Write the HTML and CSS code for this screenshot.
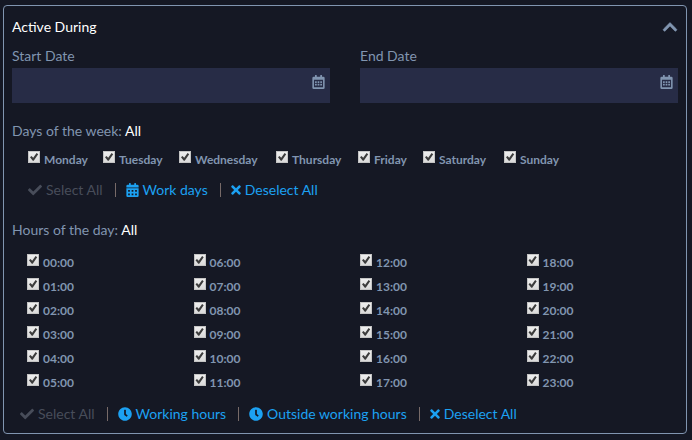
FILE: index.html
```html
<!DOCTYPE html>
<html lang="en">
<head>
<meta charset="utf-8">
<title>Active During</title>
<link rel="stylesheet" href="styles.css">
</head>
<body>
<svg class="sprite" aria-hidden="true">
  <symbol id="check" viewBox="0 0 512 512"><path d="M173.898 439.404l-166.4-166.4c-9.997-9.997-9.997-26.206 0-36.204l36.203-36.204c9.997-9.998 26.207-9.998 36.204 0L192 312.69 432.095 72.596c9.997-9.997 26.207-9.997 36.204 0l36.203 36.204c9.997 9.997 9.997 26.206 0 36.204l-294.4 294.401c-9.998 9.997-26.207 9.997-36.204-.001z"/></symbol>
  <symbol id="times" viewBox="0 0 352 512"><path d="M242.72 256l100.07-100.07c12.28-12.28 12.28-32.19 0-44.48l-22.24-22.24c-12.28-12.28-32.19-12.28-44.48 0L176 189.28 75.93 89.21c-12.28-12.28-32.19-12.28-44.48 0L9.21 111.45c-12.28 12.28-12.28 32.19 0 44.48L109.28 256 9.21 356.07c-12.28 12.28-12.28 32.19 0 44.48l22.24 22.24c12.28 12.28 32.2 12.28 44.48 0L176 322.72l100.07 100.07c12.28 12.28 32.2 12.28 44.48 0l22.24-22.24c12.28-12.28 12.28-32.19 0-44.48L242.72 256z"/></symbol>
  <symbol id="clock" viewBox="0 0 512 512"><path d="M256,8C119,8,8,119,8,256S119,504,256,504,504,393,504,256,393,8,256,8Zm92.49,313h0l-20,25a16,16,0,0,1-22.49,2.5h0l-67-49.72a40,40,0,0,1-15-31.23V112a16,16,0,0,1,16-16h32a16,16,0,0,1,16,16V256l58,42.5A16,16,0,0,1,348.49,321Z"/></symbol>
  <symbol id="calendar" viewBox="0 0 448 512"><path fill-rule="evenodd" d="M0 192h448v272a48 48 0 0 1-48 48H48a48 48 0 0 1-48-48zM64 256v64h64v-64zM192 256v64h64v-64zM320 256v64h64v-64zM64 384v64h64v-64zM192 384v64h64v-64zM320 384v64h64v-64zM0 160v-48a48 48 0 0 1 48-48h48V16a16 16 0 0 1 16-16h32a16 16 0 0 1 16 16v48h128V16a16 16 0 0 1 16-16h32a16 16 0 0 1 16 16v48h48a48 48 0 0 1 48 48v48z"/></symbol>
  <symbol id="calendar-outline" viewBox="0 0 448 512"><path fill-rule="evenodd" d="M400 64h-48V12a12 12 0 0 0-12-12h-40a12 12 0 0 0-12 12v52H160V12a12 12 0 0 0-12-12h-40a12 12 0 0 0-12 12v52H48a48 48 0 0 0-48 48v352a48 48 0 0 0 48 48h352a48 48 0 0 0 48-48V112a48 48 0 0 0-48-48zM58 170h332v282H58z"/><path d="M96 236a12 12 0 0 1 12-12h40a12 12 0 0 1 12 12v40a12 12 0 0 1-12 12h-40a12 12 0 0 1-12-12zM192 236a12 12 0 0 1 12-12h40a12 12 0 0 1 12 12v40a12 12 0 0 1-12 12h-40a12 12 0 0 1-12-12zM288 236a12 12 0 0 1 12-12h40a12 12 0 0 1 12 12v40a12 12 0 0 1-12 12h-40a12 12 0 0 1-12-12zM96 332a12 12 0 0 1 12-12h40a12 12 0 0 1 12 12v40a12 12 0 0 1-12 12h-40a12 12 0 0 1-12-12zM192 332a12 12 0 0 1 12-12h40a12 12 0 0 1 12 12v40a12 12 0 0 1-12 12h-40a12 12 0 0 1-12-12zM288 332a12 12 0 0 1 12-12h40a12 12 0 0 1 12 12v40a12 12 0 0 1-12 12h-40a12 12 0 0 1-12-12z"/></symbol>
  <symbol id="chevron-up" viewBox="0 0 448 512"><path stroke="currentColor" stroke-width="20" d="M240.971 130.524l194.343 194.343c9.373 9.373 9.373 24.569 0 33.941l-22.667 22.667c-9.357 9.357-24.522 9.375-33.901.04L224 227.495 69.255 381.516c-9.379 9.335-24.544 9.317-33.901-.04l-22.667-22.667c-9.373-9.373-9.373-24.569 0-33.941L207.03 130.525c9.372-9.373 24.568-9.373 33.941-.001z"/></symbol>
</svg>

<main class="panel">
  <header class="panel-head">
    <h1 class="title">Active During</h1>
    <button class="icon-button" type="button" aria-label="Collapse"><svg class="icon icon-chevron"><use href="#chevron-up"/></svg></button>
  </header>

  <div class="dates">
    <div class="field">
      <label for="start">Start Date</label>
      <div class="date-box">
        <input class="date-input" id="start" type="text">
        <button class="icon-button" type="button" aria-label="Pick start date"><svg class="icon icon-date"><use href="#calendar-outline"/></svg></button>
      </div>
    </div>
    <div class="field">
      <label for="end">End Date</label>
      <div class="date-box">
        <input class="date-input" id="end" type="text">
        <button class="icon-button" type="button" aria-label="Pick end date"><svg class="icon icon-date"><use href="#calendar-outline"/></svg></button>
      </div>
    </div>
  </div>

  <section class="group">
    <h2 class="group-title">Days of the week: <span class="value">All</span></h2>
    <div class="days">
      <label class="option"><input type="checkbox" checked>Monday</label>
      <label class="option"><input type="checkbox" checked>Tuesday</label>
      <label class="option"><input type="checkbox" checked>Wednesday</label>
      <label class="option"><input type="checkbox" checked>Thursday</label>
      <label class="option"><input type="checkbox" checked>Friday</label>
      <label class="option"><input type="checkbox" checked>Saturday</label>
      <label class="option"><input type="checkbox" checked>Sunday</label>
    </div>
    <div class="actions actions-days">
      <button class="action" type="button" disabled><svg class="icon icon-wide"><use href="#check"/></svg>Select All</button>
      <button class="action" type="button"><svg class="icon icon-calendar"><use href="#calendar"/></svg>Work days</button>
      <button class="action" type="button"><svg class="icon icon-times"><use href="#times"/></svg>Deselect All</button>
    </div>
  </section>

  <section class="group">
    <h2 class="group-title">Hours of the day: <span class="value">All</span></h2>
    <div class="hours">
      <label class="option"><input type="checkbox" checked>00:00</label>
      <label class="option"><input type="checkbox" checked>01:00</label>
      <label class="option"><input type="checkbox" checked>02:00</label>
      <label class="option"><input type="checkbox" checked>03:00</label>
      <label class="option"><input type="checkbox" checked>04:00</label>
      <label class="option"><input type="checkbox" checked>05:00</label>
      <label class="option"><input type="checkbox" checked>06:00</label>
      <label class="option"><input type="checkbox" checked>07:00</label>
      <label class="option"><input type="checkbox" checked>08:00</label>
      <label class="option"><input type="checkbox" checked>09:00</label>
      <label class="option"><input type="checkbox" checked>10:00</label>
      <label class="option"><input type="checkbox" checked>11:00</label>
      <label class="option"><input type="checkbox" checked>12:00</label>
      <label class="option"><input type="checkbox" checked>13:00</label>
      <label class="option"><input type="checkbox" checked>14:00</label>
      <label class="option"><input type="checkbox" checked>15:00</label>
      <label class="option"><input type="checkbox" checked>16:00</label>
      <label class="option"><input type="checkbox" checked>17:00</label>
      <label class="option"><input type="checkbox" checked>18:00</label>
      <label class="option"><input type="checkbox" checked>19:00</label>
      <label class="option"><input type="checkbox" checked>20:00</label>
      <label class="option"><input type="checkbox" checked>21:00</label>
      <label class="option"><input type="checkbox" checked>22:00</label>
      <label class="option"><input type="checkbox" checked>23:00</label>
    </div>
    <div class="actions actions-hours">
      <button class="action" type="button" disabled><svg class="icon icon-wide"><use href="#check"/></svg>Select All</button>
      <button class="action" type="button"><svg class="icon icon-wide"><use href="#clock"/></svg>Working hours</button>
      <button class="action" type="button"><svg class="icon icon-wide"><use href="#clock"/></svg>Outside working hours</button>
      <button class="action" type="button"><svg class="icon icon-times"><use href="#times"/></svg>Deselect All</button>
    </div>
  </section>
</main>
</body>
</html>
```
FILE: styles.css
```css
* { box-sizing: border-box; }

body {
  margin: 0;
  padding: 5px 5px 5px 3px;
  background: #151824;
  color: #8195b0;
  font: 14px/20px Lato, "Open Sans", sans-serif;
}

button, input { font: inherit; color: inherit; }

.sprite { display: none; }
.icon { display: block; flex: none; height: 14px; fill: currentColor; }
.icon-wide { width: 14px; }
.icon-calendar { width: 13px; }
.icon-times { width: 10px; }
.icon-date { width: 13px; height: 14px; }
.icon-chevron { width: 16px; height: 16px; overflow: visible; }

.panel {
  padding: 11px 8px 9px;
  border: 1px solid #8195b0;
  border-radius: 4px;
}

.panel-head {
  display: flex;
  justify-content: space-between;
  align-items: center;
}

.title {
  margin: 0;
  color: #fff;
  font-size: 14px;
  font-weight: 400;
}

.icon-button {
  padding: 0;
  border: 0;
  background: none;
  cursor: pointer;
}

.dates {
  display: grid;
  grid-template-columns: 1fr 1fr;
  gap: 30px;
  margin-top: 9px;
}

.field { display: flex; flex-direction: column; gap: 2px; }

.date-box {
  display: flex;
  align-items: flex-start;
  height: 35px;
  padding: 7px 5px 0 8px;
  background: #272c46;
}

.date-input {
  flex: 1;
  min-width: 0;
  padding: 0;
  border: 0;
  outline: 0;
  background: none;
}

.group { margin-top: 18px; }
.group + .group { margin-top: 20px; }
.group-title { margin: 0; font-size: 14px; font-weight: 400; }
.value { color: #fff; }

.option {
  display: flex;
  gap: 4px;
  font-size: 12px;
  font-weight: 700;
  line-height: 24px;
}

.option input {
  appearance: none;
  flex: none;
  width: 12px;
  height: 12px;
  margin: 3px 0 0;
  border: 1px solid #c4c4c4;
  background: linear-gradient(#eee, #dadada);
}

.option input:checked::before {
  content: "";
  display: block;
  width: 10px;
  height: 10px;
  background: #3c3c3c;
  clip-path: polygon(10% 52%, 25% 39%, 42% 57%, 76% 10%, 92% 22%, 47% 88%, 38% 88%);
}

.days {
  display: grid;
  grid-template-columns: 75px 76px 97px 82px 65px 81px auto;
  margin-top: 7px;
  padding-left: 16px;
}

.hours {
  display: grid;
  grid-template-rows: repeat(6, 24px);
  grid-template-columns: repeat(4, 1fr);
  grid-auto-flow: column;
  margin-top: 11px;
}

.hours .option { padding-left: 15px; }

.actions { display: flex; }
.actions-days { margin-top: 8px; padding-left: 16px; }
.actions-hours { margin-top: 9px; padding-left: 8px; }

.action {
  display: flex;
  align-items: center;
  gap: 4px;
  padding: 0;
  border: 0;
  background: none;
  color: #1ca1f2;
  cursor: pointer;
}

.action:disabled { color: #484d5a; cursor: default; }

.action + .action::before {
  content: "";
  width: 1px;
  height: 14px;
  margin: 0 6px 0 12px;
  background: #776a68;
}
```
